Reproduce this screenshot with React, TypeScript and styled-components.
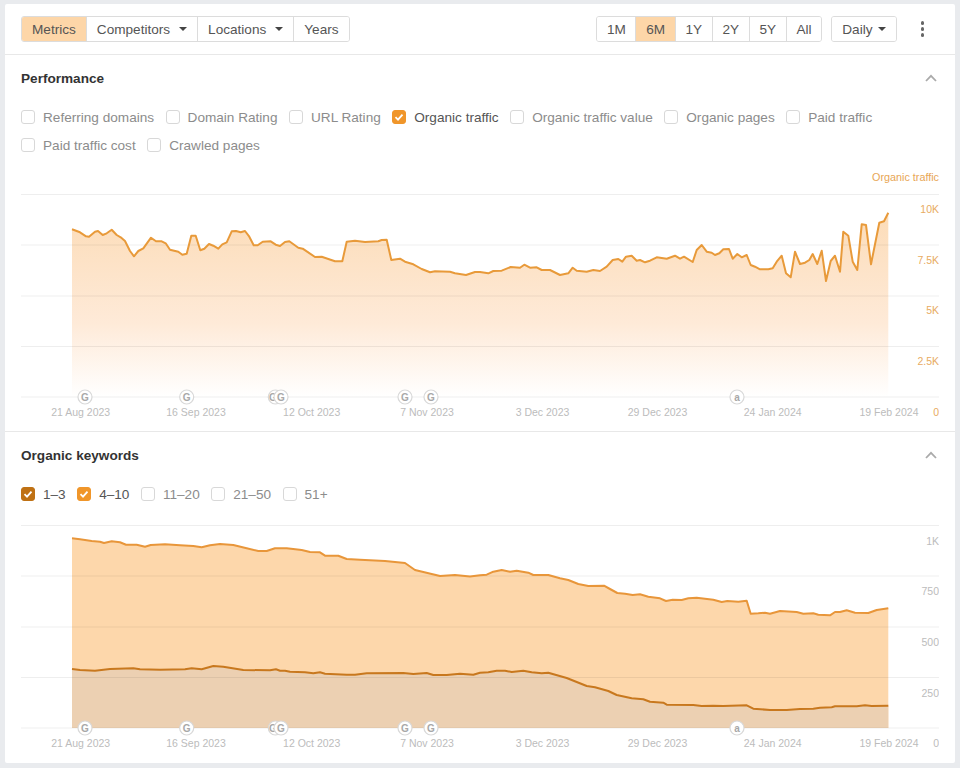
import React from 'react'
import styled, { createGlobalStyle } from 'styled-components'

// chart points are in page pixels, the svg viewBox is offset to match
const TRAFFIC = '72,229.3 80,232.3 86,236.3 89,236.7 95,231.7 98,231 102.7,235 106.7,233.3 111.7,229.7 116.7,235 120.7,237.3 125,241 130,251 134,256.3 138.3,251 143.3,248.3 151,237.7 156,241.3 161.7,241.3 165.7,243.3 170,249.7 178.3,251.7 182.3,254.7 186.7,253.7 191.3,235.7 195.7,235.7 200.3,250.3 204.3,248.7 209,244 213.3,245.7 218.3,248.7 222.3,244.3 226.7,242.3 231.7,231.3 236,231 240.7,232.3 245,231 249.3,236.7 253.7,245.3 257.7,245.3 262.7,241.7 270.7,241.3 275.7,244.7 280,246 285,242 289.3,241.3 298.3,247.7 302.7,248.7 315,257 321.7,256.7 335,261.3 342.3,261.3 346.7,241.7 355,240.7 365,242 378.3,241.3 381.7,240 386.7,239.7 391.3,260 400,258.7 405,261.7 413.3,264.3 421.7,269 430,272.3 435,271.3 450,271.7 455,273.3 466,275 475,272 480,272 488.3,273.3 493.3,271 501.7,270.7 510.7,267 520,267.7 524.3,264.7 530,267.7 536.7,267.3 541.7,270 550,270 560,275 568.3,273.3 572.7,267.7 576.7,270.7 586.7,271.7 593.3,270 600,271 606.7,266.7 612.7,260 618.3,259 622.3,261.7 626,256.7 631.7,255.7 636.7,260.7 640,260 645,262.3 650,260.7 656.7,257.3 666.7,258.7 675,255.7 680,258.7 684,256.7 692.7,262 696.7,250 701.7,245 706.7,251.7 711.7,252.7 715,255 719.3,253.3 723.3,249.3 729,249 732.7,258.7 737.3,254 741.7,257.3 746.7,255 750.7,265 755,266.7 760,269.3 768.3,269.3 772.7,268.3 776.7,261.7 781.7,255.7 786,273.3 790.7,277.3 795,251.7 800,264 805,262.7 809.3,260 812.7,254 817.3,264 821.7,250.7 826,281 830.7,261 835,255.7 840,271.7 843.3,231.7 848.3,235.7 852.7,261.7 857.3,270 861.7,224.3 866,225 871,264.3 879.3,222.7 884,221.3 888.3,212.7'
const KEYWORDS_TOP = '72,538.3 80,539.3 91.7,541 100,541.7 104,543 111.7,541.3 120,542.3 126,544.7 136.7,544.7 145,546.7 150.7,545 165,544.3 180,545.3 193.3,546 201.7,547.3 210,545.3 220,544 233.3,545 246.7,548.3 258.3,551 266.7,551 275,548.3 286.7,548.3 301.7,550 310,552 320,552.3 325,555.7 338.3,555.7 346.7,559 360,559.7 385,561 405,563 415,570 440,576 455,575 470,576.5 480,575.3 486.7,574.7 493.3,571.7 501.7,570 510,571.7 516.7,570.7 528.3,572.7 533.3,575 548.3,575 560,578.3 568.3,580 578.3,584 588.3,586 604,585.7 610,589 617.3,593 625,593.7 632.7,595 640,594.3 648.3,596.7 660,598.3 666,601 672.7,599.7 681.7,600 688.3,598.3 696.7,597.7 713.3,599.7 721.7,602 727.3,601 738.3,601.7 746.7,600.7 750.7,613.7 758.3,613.3 765,612.7 770,613.7 780,611 796.7,612 803.3,613.7 813.3,613.3 818.3,614.7 830,615.3 835,612 840,612 846.7,610.3 855,612.7 868.3,613 876.7,610 888.3,608.3'
const KEYWORDS_LOW = '72,669 80,670 95,670.7 110,669 133.3,668.3 140,669.3 160,669.7 185,669.3 191.7,668.3 201.7,669.3 213.3,666 223.3,666.7 243.3,670 270,670.3 276,669.3 280,670.7 285,670.7 290,671.7 305,672.3 313.3,673.3 320,672.3 325,673.7 346.7,674.7 355,674.7 366.7,673.3 403.3,673 413.3,674 426.7,673 433.3,675 446.7,675 460,673.7 473.3,674.7 480,672.7 488.3,672.3 496.7,670.7 505,670.7 511.7,672 523.3,670.7 531.7,672.3 541.7,673.3 548.3,672.7 566.7,678 586.7,686 595,687.3 608.3,691 616.7,695 631.7,698.3 643.3,699.3 650,701.7 663.3,702.7 666.7,704.7 693.3,705 701.7,706 713.3,705.7 723.3,706 746.7,705.3 753.3,708.7 770,710 786.7,710 800,709 813.3,708.7 820,707.7 831.7,707.3 835,706.3 856.7,706.3 865,705.3 871.7,706 888.3,705.7'

const DATES: [string, number][] = [
  ['21 Aug 2023', 80.7],
  ['16 Sep 2023', 196],
  ['12 Oct 2023', 311.7],
  ['7 Nov 2023', 427],
  ['3 Dec 2023', 542.5],
  ['29 Dec 2023', 657.5],
  ['24 Jan 2024', 772.7],
  ['19 Feb 2024', 889],
]

// letter, dot x, letter x
const EVENTS: [string, number, number][] = [
  ['G', 85, 85],
  ['G', 186.7, 186.7],
  ['G', 275.3, 272.8],
  ['G', 281, 281],
  ['G', 405, 405],
  ['G', 431, 431],
  ['a', 737, 737],
]

const METRICS = [
  'Referring domains',
  'Domain Rating',
  'URL Rating',
  'Organic traffic',
  'Organic traffic value',
  'Organic pages',
  'Paid traffic',
  'Paid traffic cost',
  'Crawled pages',
]

function areaPoints(line: string, base: number) {
  const pts = line.split(' ')
  const first = pts[0].split(',')[0]
  const last = pts[pts.length - 1].split(',')[0]
  return `${first},${base} ${line} ${last},${base}`
}

export default function App() {
  return (
    <Page>
      <GlobalStyle />
      <Card>
        <Toolbar>
          <ButtonGroup>
            <ToolButton $active>Metrics</ToolButton>
            <ToolButton>Competitors<Caret $gap={9} /></ToolButton>
            <ToolButton>Locations<Caret $gap={9} /></ToolButton>
            <ToolButton>Years</ToolButton>
          </ButtonGroup>
          <ToolbarRight>
            <ButtonGroup>
              <RangeButton>1M</RangeButton>
              <RangeButton $active>6M</RangeButton>
              <RangeButton>1Y</RangeButton>
              <RangeButton>2Y</RangeButton>
              <RangeButton>5Y</RangeButton>
              <RangeButton>All</RangeButton>
            </ButtonGroup>
            <ButtonGroup>
              <ToolButton>Daily<Caret $gap={5} /></ToolButton>
            </ButtonGroup>
            <MoreDots><i /><i /><i /></MoreDots>
          </ToolbarRight>
        </Toolbar>

        <Section $bordered>
          <SectionHeader>
            <SectionTitle>Performance</SectionTitle>
            <Chevron />
          </SectionHeader>
          <Checks>
            {METRICS.map(m => (
              <CheckItem key={m} label={m} color={m === 'Organic traffic' ? '#f0962a' : undefined} />
            ))}
          </Checks>
          <Legend>Organic traffic</Legend>
          <ChartSvg width="918" height="244" viewBox="21 187 918 244">
            <defs>
              <linearGradient id="trafficFill" gradientUnits="userSpaceOnUse" x1="0" y1="212" x2="0" y2="397">
                <stop offset="0" stopColor="#fcdcb8" />
                <stop offset="0.6" stopColor="#feead8" />
                <stop offset="1" stopColor="#ffffff" />
              </linearGradient>
            </defs>
            <polygon points={areaPoints(TRAFFIC, 397)} fill="url(#trafficFill)" />
            <Grid rows={[194.5, 245, 296, 346.5, 397]} />
            <DataLine points={TRAFFIC} stroke="#e89a3a" />
            <Events y={397} />
            <Dates y={416} />
            <AxisLabel $orange x="939" y="213">10K</AxisLabel>
            <AxisLabel $orange x="939" y="264">7.5K</AxisLabel>
            <AxisLabel $orange x="939" y="314">5K</AxisLabel>
            <AxisLabel $orange x="939" y="365">2.5K</AxisLabel>
            <AxisLabel $orange x="939" y="416">0</AxisLabel>
          </ChartSvg>
        </Section>

        <Section>
          <SectionHeader>
            <SectionTitle>Organic keywords</SectionTitle>
            <Chevron />
          </SectionHeader>
          <Checks>
            <CheckItem label="1–3" color="#bf7114" />
            <CheckItem label="4–10" color="#f0962a" />
            <CheckItem label="11–20" />
            <CheckItem label="21–50" />
            <CheckItem label="51+" />
          </Checks>
          <ChartSvg width="918" height="255" viewBox="21 508 918 255">
            <polygon points={areaPoints(KEYWORDS_TOP, 728)} fill="#fdd7ab" />
            <polygon points={areaPoints(KEYWORDS_LOW, 728)} fill="#ecd0b2" />
            <Grid rows={[525.5, 576, 627, 677.5, 728]} />
            <DataLine points={KEYWORDS_TOP} stroke="#e8963a" />
            <DataLine points={KEYWORDS_LOW} stroke="#c8781e" />
            <Events y={728} />
            <Dates y={747} />
            <AxisLabel x="939" y="545">1K</AxisLabel>
            <AxisLabel x="939" y="595">750</AxisLabel>
            <AxisLabel x="939" y="646">500</AxisLabel>
            <AxisLabel x="939" y="697">250</AxisLabel>
            <AxisLabel x="939" y="747">0</AxisLabel>
          </ChartSvg>
        </Section>
      </Card>
    </Page>
  )
}

function CheckItem({ label, color }: { label: string; color?: string }) {
  return (
    <CheckRow $checked={!!color}>
      <Box $color={color}>
        {color && (
          <svg width="10" height="10" viewBox="0 0 10 10">
            <path d="M1.5 5.2 L4 7.6 L8.5 2.6" fill="none" stroke="#fff" strokeWidth="1.8" />
          </svg>
        )}
      </Box>
      {label}
    </CheckRow>
  )
}

function Chevron() {
  return (
    <ChevronIcon width="12" height="8" viewBox="0 0 12 8">
      <path d="M1 7 L6 1.8 L11 7" fill="none" stroke="#aaa" strokeWidth="1.8" />
    </ChevronIcon>
  )
}

function Grid({ rows }: { rows: number[] }) {
  return (
    <>
      {rows.map(y => (
        <GridLine key={y} x1="21" x2="940" y1={y} y2={y} />
      ))}
    </>
  )
}

function Events({ y }: { y: number }) {
  return (
    <>
      {EVENTS.map(([letter, x, letterX]) => (
        <g key={x}>
          <EventDot cx={x} cy={y} r="7" />
          <EventLetter x={letterX} y={y + 3.5}>{letter}</EventLetter>
        </g>
      ))}
    </>
  )
}

function Dates({ y }: { y: number }) {
  return (
    <>
      {DATES.map(([label, x]) => (
        <DateLabel key={label} x={x} y={y}>{label}</DateLabel>
      ))}
    </>
  )
}

const GlobalStyle = createGlobalStyle`
  html, body {
    margin: 0;
    padding: 0;
    background: #e9ebee;
    font-family: "Liberation Sans", Arial, sans-serif;
  }
`
const Page = styled.div`
  padding: 4px 5px 5px;
  box-sizing: border-box;
  height: 768px;
  overflow: hidden;
`
const Card = styled.div`
  background: #fff;
  width: 950px;
  height: 759px;
  border-radius: 2px;
`
const Toolbar = styled.div`
  display: flex;
  justify-content: space-between;
  align-items: center;
  padding: 12px 16px;
  border-bottom: 1px solid #e8e8e8;
`
const ToolbarRight = styled.div`
  display: flex;
  align-items: center;
  gap: 9px;
`
const ButtonGroup = styled.div`
  display: flex;
  height: 26px;
  box-sizing: border-box;
  border: 1px solid #dcdcdc;
  border-radius: 3px;
  overflow: hidden;
`
const ToolButton = styled.div<{ $active?: boolean }>`
  display: flex;
  align-items: center;
  padding: 0 10px;
  font-size: 13.6px;
  color: #555;
  background: ${p => (p.$active ? '#fdd6a8' : '#fff')};
  & + & {
    border-left: 1px solid #dcdcdc;
  }
`
const RangeButton = styled(ToolButton)`
  padding: 0 9.7px;
  & + & {
    border-left: 1px solid #dcdcdc;
  }
`
const Caret = styled.span<{ $gap: number }>`
  width: 0;
  height: 0;
  margin-left: ${p => p.$gap}px;
  border-left: 4px solid transparent;
  border-right: 4px solid transparent;
  border-top: 4px solid #444;
`
const MoreDots = styled.div`
  display: flex;
  flex-direction: column;
  gap: 2.5px;
  width: 3.5px;
  margin: 0 15px 0 15px;
  & i {
    width: 3.5px;
    height: 3.5px;
    border-radius: 50%;
    background: #666;
  }
`
const Section = styled.div<{ $bordered?: boolean }>`
  padding: 14px 15px 0 16px;
  border-bottom: ${p => (p.$bordered ? '1px solid #e8e8e8' : 'none')};
`
const SectionHeader = styled.div`
  display: flex;
  justify-content: space-between;
  align-items: center;
  height: 18px;
`
const SectionTitle = styled.div`
  font-size: 13.6px;
  font-weight: 700;
  color: #333;
`
const ChevronIcon = styled.svg`
  margin-right: 3px;
`
const Checks = styled.div`
  display: flex;
  flex-wrap: wrap;
  column-gap: 11.5px;
  margin-top: 16px;
`
const CheckRow = styled.div<{ $checked: boolean }>`
  display: flex;
  align-items: center;
  gap: 8px;
  height: 28px;
  font-size: 13.6px;
  color: ${p => (p.$checked ? '#555' : '#8c8c8c')};
`
const Box = styled.span<{ $color?: string }>`
  display: flex;
  align-items: center;
  justify-content: center;
  width: 14px;
  height: 14px;
  box-sizing: border-box;
  border-radius: 3px;
  border: 1px solid ${p => p.$color ?? '#d8d8d8'};
  background: ${p => p.$color ?? '#fff'};
`
const Legend = styled.div`
  margin-top: 11px;
  padding-right: 1px;
  height: 14px;
  line-height: 14px;
  text-align: right;
  font-size: 10.8px;
  color: #e8a655;
`
const ChartSvg = styled.svg`
  display: block;
  margin-top: 3px;
  ${Checks} + & {
    margin-top: 0;
  }
`
const GridLine = styled.line`
  stroke: rgba(0, 0, 0, 0.065);
  stroke-width: 1;
`
const DataLine = styled.polyline`
  fill: none;
  stroke-width: 2;
  stroke-linejoin: round;
`
const EventDot = styled.circle`
  fill: #fff;
  stroke: #d8d8d8;
  stroke-width: 1.2;
`
const EventLetter = styled.text`
  font-size: 10px;
  font-weight: 700;
  fill: #a8a8a8;
  text-anchor: middle;
`
const DateLabel = styled.text`
  font-size: 10.5px;
  fill: #bcbcbc;
  text-anchor: middle;
`
const AxisLabel = styled.text<{ $orange?: boolean }>`
  font-size: 10.5px;
  fill: ${p => (p.$orange ? '#e8ab62' : '#bcbcbc')};
  text-anchor: end;
`
